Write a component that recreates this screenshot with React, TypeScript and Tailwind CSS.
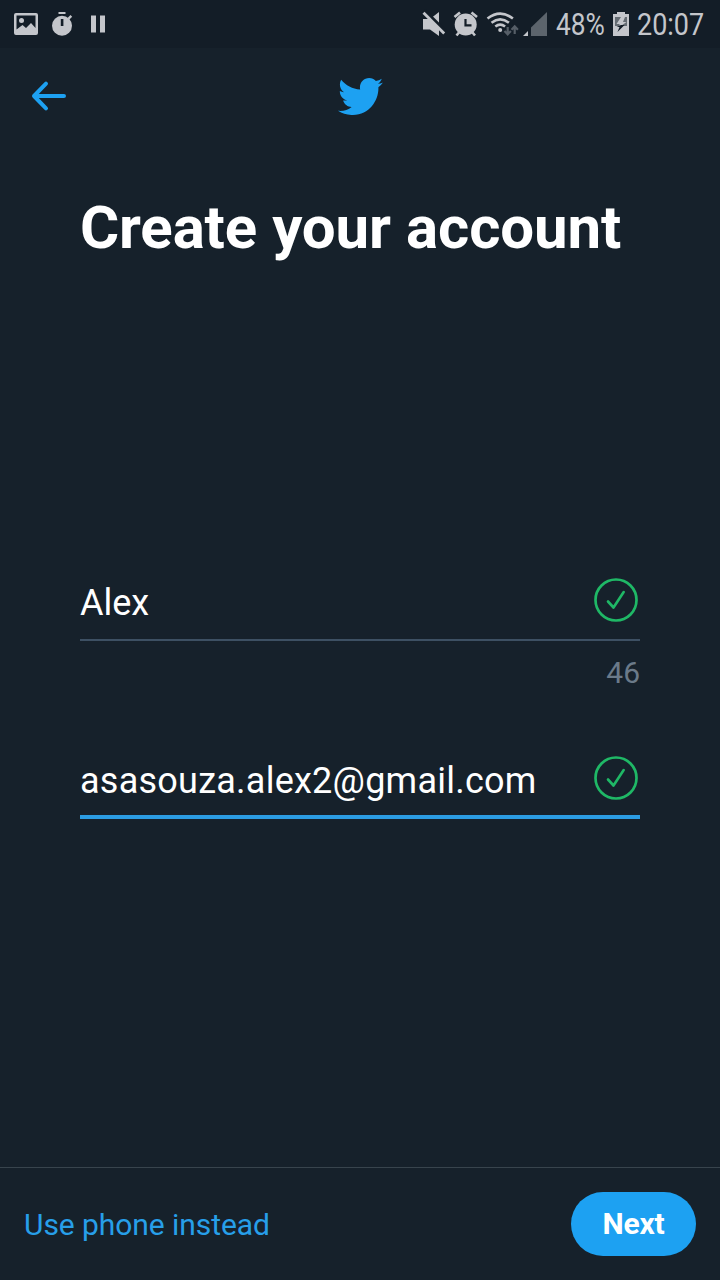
function StatusBar() {
  return (
    <div className="flex h-12 shrink-0 items-center bg-[#131d27] text-[#c4c6cb]">
      <svg className="ml-3 shrink-0" width="96" height="48" viewBox="12 0 96 48" fill="currentColor">
        <path fillRule="evenodd" d="M16 13h20a2 2 0 0 1 2 2v18a2 2 0 0 1-2 2H16a2 2 0 0 1-2-2V15a2 2 0 0 1 2-2ZM16.500 15.500V29.500L22.500 25L26 28L31 23L35.500 28V15.500Z" />
        <circle cx="21.500" cy="20.500" r="2.500" />
        <rect x="58.500" y="12" width="7" height="2" />
        <path d="M67.500 18l3-3 1.700 1.700-3 3z" />
        <circle cx="62" cy="25.700" r="10" />
        <rect x="60.800" y="19" width="2.600" height="7" fill="#131d27" />
        <rect x="91" y="15.500" width="5" height="17" />
        <rect x="100" y="15.500" width="5" height="17" />
      </svg>
      <div className="flex-1" />
      <svg className="shrink-0" width="130" height="48" viewBox="420 0 130 48" fill="currentColor">
        <path d="M423 19h7l9-7v24l-9-6.500h-7z" />
        <path d="M424 10.500l22 22" stroke="#131d27" strokeWidth="4" />
        <path d="M423.500 12.800l20.700 20.700" stroke="currentColor" strokeWidth="2.800" />
        <circle cx="465.700" cy="24.500" r="11" />
        <path d="M454.500 17l5.500-4.500M477 17l-5.500-4.500M459 32.500l-2.500 3M472.500 32.500l2.500 3" stroke="currentColor" strokeWidth="2.600" />
        <path d="M465.500 19v6.300h6" fill="none" stroke="#131d27" strokeWidth="2.200" />
        <g fill="none" stroke="currentColor" strokeWidth="2.600">
          <path d="M487.500 18.500q12.700-9.800 25.400 0" />
          <path d="M491.500 22.700q8.700-6.600 17.400 0" />
          <path d="M495.300 26.500q4.900-3.600 9.800 0" />
        </g>
        <circle cx="500.200" cy="30" r="2" />
        <g fill="none" stroke="#565e67" strokeWidth="2.200">
          <path d="M507.700 27v7M504.500 31l3.200 3.300 3.200-3.300" />
          <path d="M514.700 34v-7M511.500 29.700l3.200-3.300 3.200 3.300" />
        </g>
        <path d="M528 31v5h-5z" />
        <path d="M531 36V27.500L547 12v24z" fill="#5c646c" />
      </svg>
      <div className="ml-[6px] w-[49px] shrink-0">
        <div className="w-max origin-left scale-x-[0.85] pt-[2px] text-[31px] leading-[46px]">48%</div>
      </div>
      <svg className="ml-[6px] shrink-0" width="20" height="48" viewBox="611 0 20 48" fill="currentColor">
        <path d="M617 12h8v2h4v22h-16V14h4z" />
        <path d="M615 17h12v9h-12z" fill="#646b72" />
        <path d="M621 17h4l-2 5h3.500l-7 5v-3h-3z" />
        <path d="M621 25h3.500l-7 7 2-5h-3z" fill="#131d27" />
      </svg>
      <div className="ml-[6px] w-[83px] shrink-0">
        <div className="w-max origin-left scale-x-[0.87] pt-[2px] text-[31px] leading-[46px]">20:07</div>
      </div>
    </div>
  );
}

function Bird() {
  return (
    <svg width="45" height="37" viewBox="0.93 2.75 22.72 18.45" preserveAspectRatio="none" fill="#1da1f2" className="shrink-0">
      <path d="M23.643 4.937c-.835.37-1.732.62-2.675.733.962-.576 1.700-1.490 2.048-2.578-.9.534-1.897.922-2.958 1.130-.85-.904-2.060-1.470-3.400-1.470-2.572 0-4.658 2.086-4.658 4.660 0 .364.042.718.120 1.060-3.873-.195-7.304-2.050-9.602-4.868-.4.690-.63 1.490-.63 2.342 0 1.616.823 3.043 2.072 3.878-.764-.025-1.482-.234-2.110-.583v.060c0 2.257 1.605 4.140 3.737 4.568-.392.106-.803.162-1.227.162-.3 0-.593-.028-.877-.082.593 1.850 2.313 3.198 4.352 3.234-1.595 1.250-3.604 1.995-5.786 1.995-.376 0-.747-.022-1.112-.065 2.062 1.323 4.510 2.093 7.140 2.093 8.570 0 13.255-7.098 13.255-13.254 0-.2-.005-.402-.014-.602.910-.658 1.700-1.477 2.323-2.410z" />
    </svg>
  );
}

function ValidMark() {
  return (
    <svg width="44" height="44" viewBox="0 0 44 44" fill="none" stroke="#1fb866" className="mr-[2px] shrink-0">
      <circle cx="22" cy="22" r="20.500" strokeWidth="2.700" />
      <path d="M14 23.500l5.500 6 10.200-15.500" strokeWidth="2.600" strokeLinecap="round" strokeLinejoin="round" />
    </svg>
  );
}

export default function App() {
  return (
    <div className="flex h-[1280px] w-[720px] flex-col overflow-hidden bg-[#16212b] font-['Roboto',sans-serif] text-white">
      <StatusBar />
      <header className="flex h-24 shrink-0 items-center justify-between px-[30px]">
        <svg width="38" height="32" viewBox="0 0 38 32" fill="none" stroke="#1da1f2" strokeWidth="4" strokeLinecap="round" strokeLinejoin="round">
          <path d="M34 16H4M16 3.700L4 16l12 12.300" />
        </svg>
        <Bird />
        <div className="w-[37px]" />
      </header>
      <main className="flex flex-1 flex-col px-20">
        <h1 className="mt-[49px] h-[70px] w-max whitespace-nowrap text-[60px] leading-[70px] font-bold tracking-[-0.15px] [word-spacing:0.5px]">Create your account</h1>
        <div className="mt-[315px] flex h-[44px] items-center justify-between">
          <span className="pt-[5px] text-[36px] leading-[42px]">Alex</span>
          <ValidMark />
        </div>
        <div className="mt-[17px] h-[2px] bg-[#3d5063]" />
        <div className="mt-[14px] text-right text-[30px] leading-[36px] text-[#6b7a89]">46</div>
        <div className="mt-[65px] flex h-[44px] items-center justify-between">
          <span className="pt-[5px] text-[36px] leading-[42px] tracking-[0.245px]">asasouza.alex2@gmail.com</span>
          <ValidMark />
        </div>
        <div className="mt-[15px] h-1 bg-[#2b9ce3]" />
      </main>
      <footer className="flex h-[113px] shrink-0 items-center justify-between border-t border-[#38444d] px-6">
        <button className="pt-[2px] text-[30px] leading-[36px] tracking-[-0.06px] text-[#279fe9]">Use phone instead</button>
        <button className="h-16 w-[125px] rounded-full bg-[#1da1f2] text-[30px] leading-[64px] font-bold tracking-[-0.2px]">Next</button>
      </footer>
    </div>
  );
}
